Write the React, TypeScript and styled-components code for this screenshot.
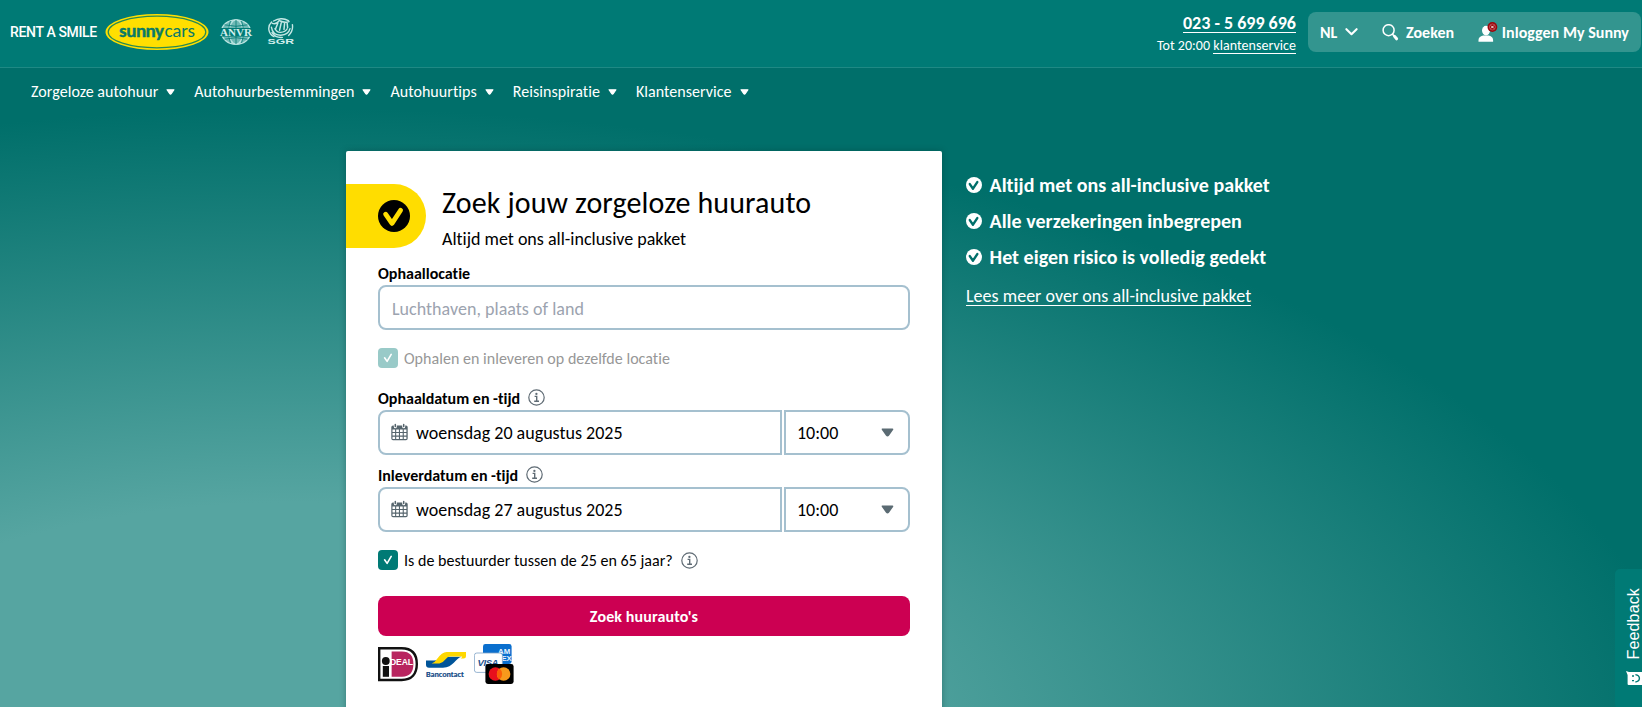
import React from "react";
import styled, { createGlobalStyle } from "styled-components";

const GlobalStyle = createGlobalStyle`
  *, *::before, *::after { box-sizing: border-box; }
  html, body { margin: 0; padding: 0; overflow: hidden; }
  body {
    font-family: Carlito, Calibri, Lato, sans-serif;
    font-variant-ligatures: none;
    color: #000;
  }
`;

const Page = styled.div`
  position: relative;
  height: 707px;
  overflow: hidden;
  display: flex;
  flex-direction: column;
  background: radial-gradient(ellipse 1390px 652px at 300px 760px, #56a5a1 39.5%, #006f6a 100%);
`;

/* ---------- top bar ---------- */

const TopBar = styled.header`
  display: flex;
  justify-content: space-between;
  height: 68px;
  flex: none;
  padding: 0 1px 0 10px;
  background: #007a75;
  border-bottom: 1px solid #1f8984;
`;

const Brand = styled.div`
  display: flex;
  align-items: center;
  height: 64px;
`;

const Slogan = styled.span`
  width: 95px;
  font: 500 14px/20px Roboto, sans-serif;
  letter-spacing: -0.35px;
  white-space: nowrap;
  color: #fff;
`;

const SunnyLogo = styled.svg`
  width: 104px;
  height: 36px;
  margin-right: 10px;
`;

const AnvrLogo = styled.svg`
  width: 34px;
  height: 28px;
  margin-right: 14px;
`;

const SgrLogo = styled.svg`
  width: 28px;
  height: 28px;
`;

const HeaderTools = styled.div`
  display: flex;
  gap: 12px;
`;

const Contact = styled.div`
  display: flex;
  flex-direction: column;
  align-items: flex-end;
  padding-top: 14px;
  color: #fff;
`;

const Phone = styled.a`
  font-size: 18px;
  font-weight: 700;
  line-height: 18px;
  border-bottom: 1px solid #fff;
`;

const Hours = styled.div`
  margin-top: 5px;
  font-size: 14px;
  line-height: 15px;
  letter-spacing: 0.03px;
`;

const HoursLink = styled.a`
  display: inline-block;
  line-height: 15px;
  border-bottom: 1px solid #fff;
`;

const AccountBar = styled.div`
  display: flex;
  align-items: center;
  width: 333px;
  height: 40px;
  margin-top: 12px;
  padding: 0 12px;
  border-radius: 8px;
  background: #33958f;
  color: #fff;
  font-size: 16px;
  font-weight: 700;
  letter-spacing: 0.04px;
  white-space: nowrap;
`;

const Language = styled.div`
  display: flex;
  align-items: center;
  gap: 8px;
  width: 62px;
`;

const SearchLink = styled.div`
  display: flex;
  align-items: center;
  gap: 7px;
  width: 96px;
`;

const LoginLink = styled.div`
  display: flex;
  align-items: center;
  gap: 4px;
`;

/* ---------- main menu ---------- */

const MainMenu = styled.nav`
  display: flex;
  align-items: center;
  flex: none;
  height: 48px;
  padding-left: 31px;
  gap: 19px;
`;

const MenuItem = styled.a`
  display: flex;
  align-items: center;
  gap: 8px;
  color: #fff;
  font-size: 16px;
  line-height: 20px;
  letter-spacing: 0.05px;
  white-space: nowrap;
`;

/* ---------- search form ---------- */

const Main = styled.main`
  display: flex;
  align-items: flex-start;
  padding: 35px 0 0 346px;
  gap: 24px;
`;

const Card = styled.section`
  width: 596px;
  height: 620px;
  flex: none;
  padding-top: 33px;
  border-radius: 2px;
  background: #fff;
  box-shadow: 0 0 6px rgba(0, 50, 46, 0.35);
`;

const CardHead = styled.div`
  display: flex;
  gap: 16px;
  height: 72px;
`;

const YellowTab = styled.div`
  display: flex;
  align-items: center;
  width: 80px;
  height: 64px;
  padding-left: 32px;
  border-radius: 0 32px 32px 0;
  background: #fd0;
`;

const CardTitle = styled.h1`
  margin: 0;
  font-size: 30px;
  font-weight: 400;
  line-height: 38px;
  letter-spacing: 0.13px;
`;

const CardSubtitle = styled.p`
  margin: 5px 0 0;
  font-size: 18px;
  line-height: 24px;
`;

const FormBody = styled.form`
  display: flex;
  flex-direction: column;
  padding: 7px 32px 0;
`;

const Label = styled.label`
  display: flex;
  align-items: center;
  gap: 8px;
  height: 20px;
  margin-bottom: 2px;
  font-size: 16px;
  font-weight: 700;
  svg { position: relative; top: -1px; }
`;

const LocationInput = styled.input`
  height: 45px;
  margin-bottom: 18px;
  padding: 3px 12px 0;
  border: 2px solid #a5c0cf;
  border-radius: 8px;
  outline: none;
  font: 400 18px/24px Carlito, Calibri, Lato, sans-serif;
  font-variant-ligatures: none;
  letter-spacing: 0.03px;
  &::placeholder { color: #9ca3af; opacity: 1; }
`;

const CheckRow = styled.div<{ $muted?: boolean }>`
  display: flex;
  align-items: center;
  gap: 6px;
  height: 20px;
  margin-bottom: ${(p) => (p.$muted ? 20 : 26)}px;
  font-size: 16px;
  letter-spacing: 0.03px;
  color: ${(p) => (p.$muted ? "#979797" : "#000")};
`;

const CheckBox = styled.span<{ $muted?: boolean }>`
  display: grid;
  place-items: center;
  width: 20px;
  height: 20px;
  border-radius: 4px;
  background: ${(p) => (p.$muted ? "#99cac8" : "#007a75")};
`;

const CheckText = styled.span`
  margin-right: 2px;
`;

const DateRow = styled.div<{ $last?: boolean }>`
  display: flex;
  gap: 2px;
  height: 45px;
  margin-bottom: ${(p) => (p.$last ? 18 : 10)}px;
  font-size: 18px;
`;

const DateField = styled.div`
  display: flex;
  align-items: center;
  gap: 8px;
  width: 404px;
  padding-left: 11px;
  border: 2px solid #a5c0cf;
  border-radius: 8px 0 0 8px;
  svg { position: relative; top: -1px; }
`;

const TimeField = styled.div`
  display: flex;
  align-items: center;
  justify-content: space-between;
  width: 126px;
  padding: 0 14px 0 11px;
  border: 2px solid #a5c0cf;
  border-radius: 0 8px 8px 0;
`;

const FieldText = styled.span`
  line-height: 22px;
`;

const SubmitButton = styled.button`
  height: 40px;
  padding: 2px 0 0;
  border: 0;
  border-radius: 8px;
  background: #cc0052;
  color: #fff;
  font: 700 16px/20px Carlito, Calibri, Lato, sans-serif;
  letter-spacing: 0.12px;
`;

const Payments = styled.div`
  display: flex;
  gap: 8px;
  padding-top: 8px;
`;

/* ---------- benefits ---------- */

const Benefits = styled.aside`
  padding-top: 16px;
  color: #fff;
`;

const BenefitList = styled.ul`
  margin: 0;
  padding: 0;
  list-style: none;
`;

const Benefit = styled.li`
  display: flex;
  align-items: center;
  gap: 7.5px;
  height: 36px;
  font-size: 20px;
  font-weight: 700;
  letter-spacing: 0.03px;
`;

const MoreLink = styled.a`
  display: inline-block;
  margin-top: 13px;
  font-size: 18px;
  line-height: 17px;
  letter-spacing: 0.03px;
  border-bottom: 1px solid #fff;
`;

const FeedbackTab = styled.div`
  position: absolute;
  right: 0;
  top: 569px;
  display: flex;
  flex-direction: column;
  align-items: flex-end;
  gap: 12px;
  width: 27px;
  height: 140px;
  padding-top: 19px;
  border-radius: 5px 0 0 5px;
  background: #007a75;
  color: #fff;
`;

const FeedbackText = styled.span`
  writing-mode: vertical-rl;
  transform: rotate(180deg);
  width: 18px;
  margin-right: -1px;
  font: 400 16px/18px "Liberation Sans", Arial, sans-serif;
  letter-spacing: 0.15px;
`;

/* ---------- icons ---------- */

const Caret = ({ w = 9, h = 6, color = "#fff" }: { w?: number; h?: number; color?: string }) => (
  <svg width={w} height={h} viewBox="0 0 12 8">
    <path d="M1.4 1h9.2L6.7 6.6a.9.9 0 0 1-1.4 0z" fill={color} stroke={color} strokeWidth="1.6" strokeLinejoin="round" />
  </svg>
);

const InfoIcon = () => (
  <svg width="17" height="17" viewBox="0 0 17 17" fill="none" stroke="#5f6b74">
    <circle cx="8.5" cy="8.5" r="7.7" strokeWidth="1.2" />
    <path d="M6.6 7.4h2.1v4.6M6.2 12.2h4.8" strokeWidth="1.4" />
    <circle cx="8.4" cy="4.9" r="1.15" fill="#5f6b74" stroke="none" />
  </svg>
);

const CalendarIcon = () => (
  <svg width="17" height="18" viewBox="0 0 17 18">
    <path d="M2 2.6h13q1.7 0 1.7 1.7v11.2q0 1.8-1.7 1.8H2q-1.7 0-1.7-1.8V4.3q0-1.7 1.7-1.7z" fill="#56656d" />
    <path
      d="M1.5 6.5h2.6v2.5h-2.6zM5.2 6.5h2.7v2.5h-2.7zM9 6.5h2.7v2.5h-2.7zM12.8 6.5h2.6v2.5h-2.6zM1.5 10.1h2.6v2.5h-2.6zM5.2 10.1h2.7v2.5h-2.7zM9 10.1h2.7v2.5h-2.7zM12.8 10.1h2.6v2.5h-2.6zM1.5 13.7h2.6v2.4h-2.6zM5.2 13.7h2.7v2.4h-2.7zM9 13.7h2.7v2.4h-2.7zM12.8 13.7h2.6v2.4h-2.6z"
      fill="#fff"
    />
    <path d="M4.3 1.6v2.2M12.7 1.6v2.2" stroke="#fff" strokeWidth="3" strokeLinecap="round" />
    <path d="M4.3 1.4v2.2M12.7 1.4v2.2" stroke="#56656d" strokeWidth="1.5" strokeLinecap="round" />
  </svg>
);

const SmallCheck = () => (
  <svg width="10" height="10" viewBox="0 0 10 10" fill="none" stroke="#fff" strokeWidth="1.6" strokeLinecap="round" strokeLinejoin="round">
    <path d="M1.6 4.8l2.5 3.6L8.2 1.4" />
  </svg>
);

const RoundCheck = ({ size, disc, tick }: { size: number; disc: string; tick: string }) => (
  <svg width={size} height={size} viewBox="0 0 32 32">
    <circle cx="16" cy="16" r="16" fill={disc} />
    <path d="M7.6 14.2L14 23.4L22.6 10.2" fill="none" stroke={tick} strokeWidth="4.8" strokeLinecap="round" strokeLinejoin="round" />
  </svg>
);

const SunnyCars = () => (
  <SunnyLogo viewBox="0 0 104 36">
    <ellipse cx="52" cy="18" rx="51.5" ry="18" fill="#ffdf00" />
    <ellipse cx="52" cy="18" rx="48.8" ry="15.8" fill="none" stroke="#2a8a50" strokeWidth="1.2" />
    <g fontFamily="Carlito, Calibri, Lato, sans-serif" fontSize="19" fill="#0a7a68" stroke="#0a7a68">
      <text x="14" y="22.6" fontWeight="700" strokeWidth=".4" letterSpacing="-.45">sunny</text>
      <text x="59.6" y="22.6" fontWeight="400" strokeWidth="0" letterSpacing="-.1">cars</text>
    </g>
  </SunnyLogo>
);

const Anvr = () => (
  <AnvrLogo viewBox="0 0 34 28">
    <g fill="none" stroke="#b9e3e0" strokeWidth="1.3">
      <ellipse cx="17" cy="14" rx="14.6" ry="12.2" fill="#b9e3e0" fillOpacity=".6" />
      <ellipse cx="17" cy="14" rx="7" ry="12.2" />
    </g>
    <path d="M17 2v24M5.5 6.8q11.5 3 23 0M5.5 21.2q11.5-3 23 0M11.4 3Q8 14 11.4 25M22.6 3Q26 14 22.6 25" fill="none" stroke="#007a75" strokeWidth=".8" />
    <path d="M1 10h32v8.6H1z" fill="#007a75" />
    <text x="1" y="18" fontFamily="'Liberation Serif', serif" fontSize="11" fontWeight="700" fill="#d3efed" textLength="32" lengthAdjust="spacingAndGlyphs">ANVR</text>
  </AnvrLogo>
);

const Sgr = () => (
  <SgrLogo viewBox="0 0 28 28">
    <g fill="none" stroke="#c4e8e5" strokeWidth="1.4" strokeLinecap="round">
      <path d="M4.6 4A11 9.6 0 0 0 7 18.6M6.6 3Q14-1.4 21.4 2.6M25.4 6.6Q26.4 13 21.6 17.4" />
      <path d="M5.4 5.4Q9 7 12.4 2.4M13.4 3q4 2 8.6.6M8.4 11.2l2.4-6M12.6 12.2l1.6-7.4M17 11.4l.6-6.4M20.6 9.6l-.4-4.2" strokeWidth="1.5" />
      <path d="M4.4 9.2q1.2 8.2 9.4 8 7.6-.4 9.2-6.6M8 10.6q1.6 4 5.6 3.8 5-.4 6.6-3.6M5 14.6q3.4 5.4 10.4 4.8" />
    </g>
    <text x="0.5" y="26.4" fontFamily="'Liberation Sans', sans-serif" fontSize="6.4" fontWeight="700" fill="#d3efed" textLength="26.5" lengthAdjust="spacingAndGlyphs">SGR</text>
  </SgrLogo>
);

const SearchIcon = () => (
  <svg width="17" height="17" viewBox="0 0 17 17" fill="none" stroke="#fff" strokeLinecap="round">
    <circle cx="6.6" cy="6.2" r="5.5" strokeWidth="1.5" />
    <path d="M10.6 10.4l1.6 1.6" strokeWidth="1.6" />
    <path d="M12.6 12.4l2 2.4" strokeWidth="3" />
  </svg>
);

const UserIcon = () => (
  <svg width="20" height="21" viewBox="0 0 20 21">
    <ellipse cx="8" cy="8.6" rx="4" ry="4.8" fill="#fff" />
    <path d="M.5 19.8v-1.8q0-3 4.6-4.4h5.8q4.2 1.4 4.2 4.4v1.8z" fill="#fff" />
    <circle cx="14.4" cy="5" r="4.9" fill="#9c060c" />
    <circle cx="14.4" cy="5" r="3" fill="none" stroke="#e9a9ac" strokeWidth=".4" />
    <path d="M13.1 3.7l2.6 2.6M15.7 3.7l-2.6 2.6" stroke="#fff" strokeWidth=".9" />
  </svg>
);

const Ideal = () => (
  <svg width="40" height="40" viewBox="0 0 40 40">
    <path d="M1.2 4.2h22.4c10.2 0 15.2 6 15.2 15.9s-5 15.9-15.2 15.9H1.2z" fill="#fff" stroke="#111" strokeWidth="2.4" />
    <path d="M13.6 7.4H24c7.8 0 11.4 4.6 11.4 12.7S31.8 32.8 24 32.8H13.6z" fill="#b8255f" />
    <text x="12" y="20.5" fontFamily="'Liberation Sans', sans-serif" fontWeight="700" fontSize="8.6" fill="#fff" letterSpacing="-.1">DEAL</text>
    <circle cx="7.8" cy="17" r="3.9" fill="#111" />
    <path d="M4.8 22h6.2v10.8H4.8z" fill="#111" />
  </svg>
);

const Bancontact = () => (
  <svg width="40" height="40" viewBox="0 0 40 40" overflow="visible">
    <path d="M0 16.4h8c7.4 0 9.6-3.6 12.6-3.6h15c-6 1-8.4 11-18.6 11H3c-2 0-3-1-3-3z" fill="#005499" />
    <path d="M5.6 19.4q3-.6 5.4-4.4 5-7 9.6-7H40v4.2q0 2.4-2.4 2.4h-3q2-1.600 1.600-2H24q-2.600 0-4.400 2.600-2.600 3.600-6.200 4.200z" fill="#ffd800" />
    <text x="0" y="32.8" fontFamily="Carlito, Calibri, Lato, sans-serif" fontWeight="700" fontSize="8.2" fill="#124a86" stroke="#124a86" strokeWidth=".15" letterSpacing="-.05">Bancontact</text>
  </svg>
);

const CreditCards = () => (
  <svg width="40" height="40" viewBox="0 0 40 40">
    <rect x="9" y="0" width="28.6" height="20" rx="2.4" fill="#0a6fce" />
    <g fontFamily="'Liberation Sans', sans-serif" fontWeight="700" fontSize="7.8" fill="#e8f3ff">
      <text x="24" y="9.6">AM</text>
      <text x="27.6" y="16.8" letterSpacing="-.4">EX</text>
    </g>
    <rect x=".4" y="9" width="28" height="19.4" rx="2.4" fill="#fff" stroke="#7ea2c6" strokeWidth=".8" />
    <text x="3.6" y="22" fontFamily="'Liberation Sans', sans-serif" fontWeight="700" fontStyle="italic" fontSize="9.6" fill="#26538f" letterSpacing="-.5">VISA</text>
    <rect x="11.4" y="20" width="28.2" height="20" rx="2.4" fill="#000" />
    <circle cx="21.4" cy="30" r="6.8" fill="#e8101c" />
    <circle cx="29.6" cy="30" r="6.8" fill="#f79a1c" />
    <path d="M25.5 24.6a6.8 6.8 0 0 1 0 10.8 6.8 6.8 0 0 1 0-10.8z" fill="#fb5f07" />
  </svg>
);

const SmileIcon = () => (
  <svg width="16" height="15" viewBox="0 0 16 15">
    <path d="M0 0l3 1h13v13H2.6q-1 0-1-1V4z" fill="#fff" />
    <path d="M6 5h2M6 9.6h2M9.4 3.6q4 .6 4 3.700t-4 3.700" fill="none" stroke="#007a75" strokeWidth="1.400" />
  </svg>
);

/* ---------- page ---------- */

const menu = ["Zorgeloze autohuur", "Autohuurbestemmingen", "Autohuurtips", "Reisinspiratie", "Klantenservice"];

const benefits = [
  "Altijd met ons all-inclusive pakket",
  "Alle verzekeringen inbegrepen",
  "Het eigen risico is volledig gedekt",
];

const dates = [
  { label: "Ophaaldatum en -tijd", date: "woensdag 20 augustus 2025", time: "10:00" },
  { label: "Inleverdatum en -tijd", date: "woensdag 27 augustus 2025", time: "10:00" },
];

export default function App() {
  return (
    <Page>
      <GlobalStyle />
      <TopBar>
        <Brand>
          <Slogan>RENT A SMILE</Slogan>
          <SunnyCars />
          <Anvr />
          <Sgr />
        </Brand>
        <HeaderTools>
          <Contact>
            <Phone>023 - 5 699 696</Phone>
            <Hours>
              Tot 20:00 <HoursLink>klantenservice</HoursLink>
            </Hours>
          </Contact>
          <AccountBar>
            <Language>
              NL
              <svg width="13" height="8" viewBox="0 0 13 8" fill="none" stroke="#fff" strokeWidth="2.1" strokeLinecap="round" strokeLinejoin="round">
                <path d="M1.4 1.2l5.1 5 5.1-5" />
              </svg>
            </Language>
            <SearchLink>
              <SearchIcon />
              Zoeken
            </SearchLink>
            <LoginLink>
              <UserIcon />
              Inloggen My Sunny
            </LoginLink>
          </AccountBar>
        </HeaderTools>
      </TopBar>

      <MainMenu>
        {menu.map((item) => (
          <MenuItem key={item}>
            {item}
            <Caret />
          </MenuItem>
        ))}
      </MainMenu>

      <Main>
        <Card>
          <CardHead>
            <YellowTab>
              <RoundCheck size={32} disc="#000" tick="#fd0" />
            </YellowTab>
            <div>
              <CardTitle>Zoek jouw zorgeloze huurauto</CardTitle>
              <CardSubtitle>Altijd met ons all-inclusive pakket</CardSubtitle>
            </div>
          </CardHead>
          <FormBody>
            <Label>Ophaallocatie</Label>
            <LocationInput placeholder="Luchthaven, plaats of land" />
            <CheckRow $muted>
              <CheckBox $muted>
                <SmallCheck />
              </CheckBox>
              <CheckText>Ophalen en inleveren op dezelfde locatie</CheckText>
            </CheckRow>
            {dates.map((d, i) => (
              <React.Fragment key={d.label}>
                <Label>
                  {d.label}
                  <InfoIcon />
                </Label>
                <DateRow $last={i === dates.length - 1}>
                  <DateField>
                    <CalendarIcon />
                    <FieldText>{d.date}</FieldText>
                  </DateField>
                  <TimeField>
                    <FieldText>{d.time}</FieldText>
                    <Caret w={13} h={9} color="#5b6b73" />
                  </TimeField>
                </DateRow>
              </React.Fragment>
            ))}
            <CheckRow>
              <CheckBox>
                <SmallCheck />
              </CheckBox>
              <CheckText>Is de bestuurder tussen de 25 en 65 jaar?</CheckText>
              <InfoIcon />
            </CheckRow>
            <SubmitButton type="button">Zoek huurauto's</SubmitButton>
            <Payments>
              <Ideal />
              <Bancontact />
              <CreditCards />
            </Payments>
          </FormBody>
        </Card>
        <Benefits>
          <BenefitList>
            {benefits.map((b) => (
              <Benefit key={b}>
                <RoundCheck size={16} disc="#fff" tick="#006f6a" />
                {b}
              </Benefit>
            ))}
          </BenefitList>
          <MoreLink>Lees meer over ons all-inclusive pakket</MoreLink>
        </Benefits>
      </Main>

      <FeedbackTab>
        <FeedbackText>Feedback</FeedbackText>
        <SmileIcon />
      </FeedbackTab>
    </Page>
  );
}
